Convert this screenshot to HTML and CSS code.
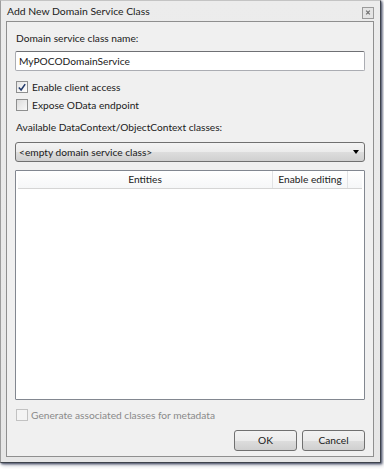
FILE: index.html
```html
<!DOCTYPE html>
<html>
<head lang="en">
    <meta charset="UTF-8">
    <title>Add New Domain Service Class</title>
    <link rel="stylesheet" href="styles.css">
</head>
<body>
<div class="window">
    <div class="titlebar">
        <span class="title">Add New Domain Service Class</span>
        <span class="close">
            <svg width="11" height="11" viewBox="0 0 11 11">
                <path d="M3.5 3.5 L7.5 7.5 M7.5 3.5 L3.5 7.5" stroke="#6d6d6d" stroke-width="1.3"/>
            </svg>
        </span>
    </div>
    <div class="panel">
        <div class="label">Domain service class name:</div>
        <div class="textbox">MyPOCODomainService</div>

        <div class="check first">
            <span class="box">
                <svg width="11" height="11" viewBox="0 0 11 11">
                    <path d="M2 5.5 L4.5 8.2 L9 1.8" fill="none" stroke="#21396b" stroke-width="1.7"/>
                </svg>
            </span>
            <span>Enable client access</span>
        </div>
        <div class="check second">
            <span class="box"></span>
            <span>Expose OData endpoint</span>
        </div>

        <div class="label spaced">Available DataContext/ObjectContext classes:</div>
        <div class="combo">
            <span>&lt;empty domain service class&gt;</span>
            <span class="arrow"></span>
        </div>

        <div class="grid">
            <div class="grid-head">
                <div class="col-entities">Entities</div>
                <div class="col-editing">Enable editing</div>
                <div class="col-filler"></div>
            </div>
        </div>

        <div class="check disabled">
            <span class="box"></span>
            <span>Generate associated classes for metadata</span>
        </div>

        <div class="buttons">
            <div class="button">OK</div>
            <div class="button">Cancel</div>
        </div>
    </div>
</div>
</body>
</html>
```

FILE: styles.css
```css
* {
    padding: 0;
    margin: 0;
    box-sizing: border-box;
}

body {
    width: 384px;
    height: 469px;
    background: #ffffff;
    font-family: Lato, "Liberation Sans", sans-serif;
    font-size: 10.2px;
    color: #1a1a1a;
    overflow: hidden;
}

.window {
    width: 381px;
    height: 463px;
    padding: 0 6px 5px 5px;
    background: linear-gradient(#ececec, #e6e6e6);
    border-top: 1px solid #c4c4c4;
    border-left: 1px solid #9c9c9c;
    border-right: 1px solid #3e434c;
    border-bottom: 1px solid #3e434c;
    box-shadow: 1px 1px 2px rgba(20, 30, 60, 0.7), 2px 2px 4px rgba(20, 30, 60, 0.35);
    display: flex;
    flex-direction: column;
}

.titlebar {
    height: 20px;
    display: flex;
    align-items: center;
    justify-content: space-between;
    padding-left: 1px;
}

.title {
    font-size: 10.4px;
    line-height: 16px;
}

.close {
    width: 12px;
    height: 12px;
    margin-right: 0;
    margin-top: 3px;
    border: 1px solid #9a9a9a;
    background: #e4e4e4;
    display: flex;
    align-items: center;
    justify-content: center;
}

.panel {
    flex: 1;
    background: #f0f0f0;
    border: 1px solid #8f8f8f;
    padding: 8px 8px 5px 8px;
    display: flex;
    flex-direction: column;
}

.label {
    line-height: 16px;
    padding-left: 1px;
}

.label.spaced {
    margin-top: 6px;
}

.textbox {
    margin-top: 5px;
    height: 20px;
    background: #ffffff;
    border: 1px solid #abadb3;
    border-top-color: #6f7074;
    border-radius: 2px;
    padding-left: 3px;
    line-height: 18px;
}

.check {
    display: flex;
    align-items: center;
    height: 16px;
    padding-left: 1px;
}

.check.first {
    margin-top: 8px;
}

.check.second {
    margin-top: 2px;
}

.check.disabled {
    margin-top: 7px;
    color: #8a8a8a;
}

.box {
    width: 12px;
    height: 12px;
    margin-right: 4px;
    border: 1px solid #8e8f8f;
    background: linear-gradient(135deg, #dcdcdc, #f8f8f8);
    display: flex;
    align-items: center;
    justify-content: center;
}

.check.first .box {
    background: linear-gradient(135deg, #e4e4e4, #ffffff);
}

.check.disabled .box {
    border-color: #c2c2c2;
    background: #f4f4f4;
    margin-right: 3px;
}

.combo {
    margin-top: 7px;
    height: 20px;
    border: 1px solid #707070;
    border-radius: 3px;
    background: linear-gradient(#f3f3f3 0%, #ebebeb 50%, #dddddd 51%, #d0d0d0 100%);
    display: flex;
    align-items: center;
    justify-content: space-between;
    padding: 0 5px 0 3px;
}

.arrow {
    width: 0;
    height: 0;
    border-left: 3.5px solid transparent;
    border-right: 3.5px solid transparent;
    border-top: 4px solid #000000;
}

.grid {
    flex: 1;
    margin-top: 8px;
    background: #ffffff;
    border: 1px solid #828790;
    border-radius: 1px;
    padding: 0 2px;
}

.grid-head {
    height: 18px;
    display: flex;
    border-bottom: 1px solid #d5d5d5;
    background: linear-gradient(#ffffff, #f6f7f8);
    line-height: 17px;
}

.col-entities {
    width: 255px;
    text-align: center;
    border-right: 1px solid #e2e3e5;
}

.col-editing {
    width: 75px;
    text-align: center;
    border-right: 1px solid #e2e3e5;
}

.col-filler {
    flex: 1;
}

.buttons {
    margin-top: 7px;
    display: flex;
    justify-content: flex-end;
    gap: 5px;
}

.button {
    width: 63px;
    height: 21px;
    border: 1px solid #707070;
    border-radius: 3px;
    background: linear-gradient(#f2f2f2 0%, #ebebeb 50%, #dddddd 51%, #cfcfcf 100%);
    text-align: center;
    line-height: 19px;
}
```
